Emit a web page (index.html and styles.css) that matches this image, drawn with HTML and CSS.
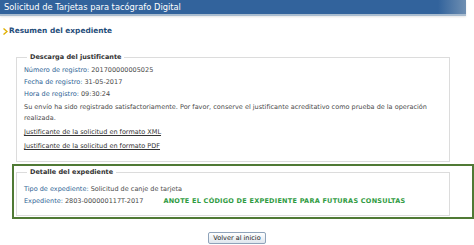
FILE: index.html
```html
<!DOCTYPE html>
<html lang="es">
<head>
    <meta charset="UTF-8">
    <title>Solicitud de Tarjetas para tacógrafo Digital</title>
    <link rel="stylesheet" href="styles.css">
</head>
<body>
    <div class="cabecera">Solicitud de Tarjetas para tacógrafo Digital</div>

    <h2 class="titulo">
        <svg class="flecha" width="5" height="7" viewBox="0 0 5 7">
            <path d="M0.5,0.5 L4,3.5 L0.5,6.5" fill="none" stroke="#e0b000" stroke-width="1.4"/>
        </svg>
        Resumen del expediente
    </h2>

    <fieldset class="bloque">
        <legend>Descarga del justificante</legend>
        <p class="dato"><span class="etiqueta">Número de registro:</span> 201700000005025</p>
        <p class="dato"><span class="etiqueta">Fecha de registro:</span> 31-05-2017</p>
        <p class="dato"><span class="etiqueta">Hora de registro:</span> 09:30:24</p>
        <p class="aviso">Su envío ha sido registrado satisfactoriamente. Por favor, conserve el justificante acreditativo como prueba de la operación realizada.</p>
        <p class="enlace"><a href="#">Justificante de la solicitud en formato XML</a></p>
        <p class="enlace"><a href="#">Justificante de la solicitud en formato PDF</a></p>
    </fieldset>

    <div class="destacado">
        <fieldset class="bloque">
            <legend>Detalle del expediente</legend>
            <p class="dato"><span class="etiqueta">Tipo de expediente:</span> Solicitud de canje de tarjeta</p>
            <p class="dato"><span class="etiqueta">Expediente:</span> 2803-000000117T-2017 <span class="nota">ANOTE EL CÓDIGO DE EXPEDIENTE PARA FUTURAS CONSULTAS</span></p>
        </fieldset>
    </div>

    <div class="acciones">
        <button class="boton">Volver al inicio</button>
    </div>
</body>
</html>
```

FILE: styles.css
```css
body {
    margin: 0;
    font-family: "DejaVu Sans", Verdana, sans-serif;
    font-size: 6.5px;
    color: #4a4a4a;
    background: #fff;
    width: 474px;
    overflow: hidden;
}

.cabecera {
    width: 458px;
    height: 14px;
    line-height: 14px;
    padding-left: 4px;
    padding-right: 4px;
    color: #fff;
    font-size: 8.3px;
    background: linear-gradient(to right, #32639c 0%, #32639c 94%, #6f8fb2 100%);
    border-bottom: 2px solid #a9bccf;
    box-shadow: 0 1px 2px rgba(0,0,0,0.1);
}

.titulo {
    margin: 10px 0 0 3px;
    font-size: 7.4px;
    font-weight: bold;
    color: #1f4d7a;
    display: flex;
    align-items: center;
    gap: 1px;
}

.flecha {
    margin-top: 2px;
}

.bloque {
    margin: 0;
    margin-left: 16px;
    width: 434px;
    box-sizing: border-box;
    border: 1px solid #dcdcdc;
    padding: 3px 6px 9px 7px;
}

.bloque legend {
    font-weight: bold;
    color: #333;
    padding: 0 3px;
    margin-left: 3px;
}

.titulo + .bloque {
    margin-top: 18px;
}

.dato {
    margin: 0;
    height: 12px;
    line-height: 12px;
}

.etiqueta {
    color: #2d5f94;
}

.aviso {
    margin: 2px 0 0 0;
    line-height: 11px;
}

.enlace {
    margin: 3px 0 0 0;
    line-height: 11px;
}

.enlace + .enlace {
    margin-top: 3px;
}

.enlace a {
    color: #333;
}

.destacado {
    margin-top: 2px;
    margin-left: 12px;
    border: 2px solid #507a35;
    padding: 2px 0 1px 2px;
    width: 462px;
    box-sizing: border-box;
}

.destacado .bloque {
    margin-left: 0;
    padding-top: 7px;
    padding-bottom: 8px;
}

.nota {
    margin-left: 18px;
    color: #2f9b42;
    font-weight: bold;
    letter-spacing: 0.25px;
}

.acciones {
    text-align: center;
    margin-top: 13px;
}

.boton {
    font-family: "DejaVu Sans", Verdana, sans-serif;
    font-size: 6.5px;
    color: #222;
    padding: 1px 4px;
    border: 1px solid #8fa3ba;
    border-radius: 2px;
    background: linear-gradient(#ffffff, #dfe6ee);
}
```
